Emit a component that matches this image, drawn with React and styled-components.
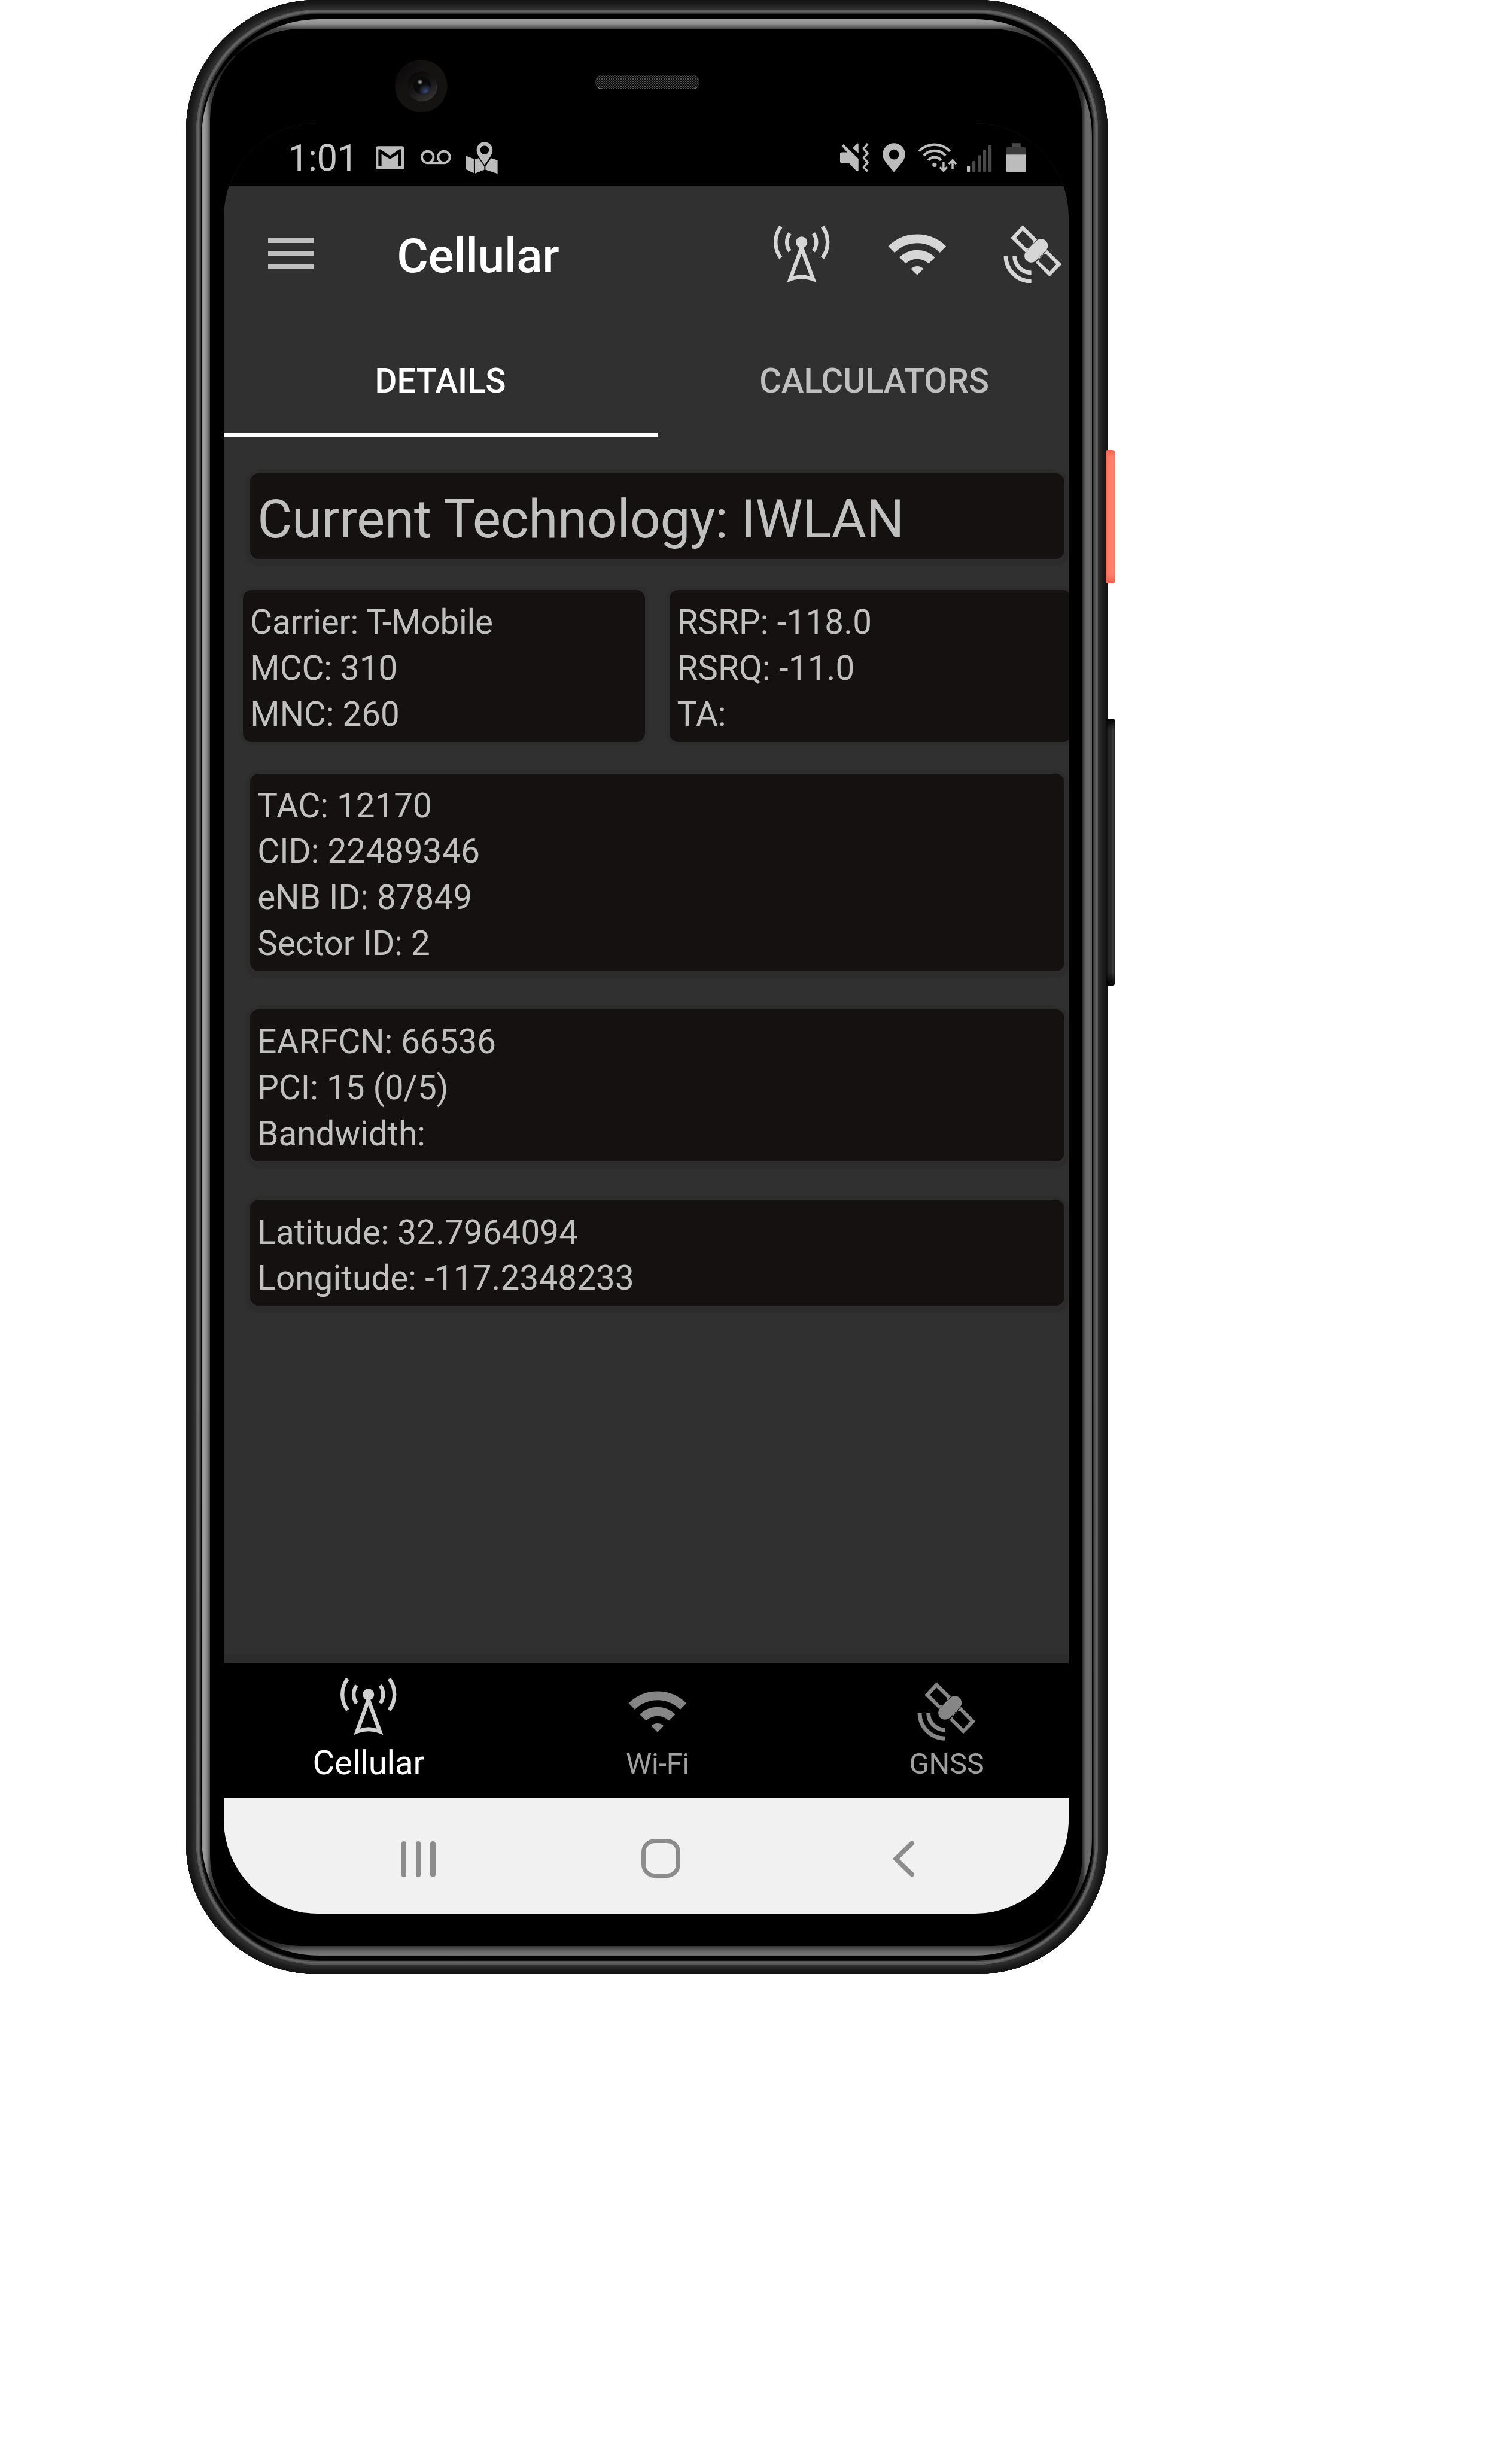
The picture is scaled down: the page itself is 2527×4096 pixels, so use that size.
import React from "react";
import styled, { createGlobalStyle, css } from "styled-components";

const u = (n) => `${+(n * 0.86985).toFixed(3)}px`;

const Global = createGlobalStyle`
  html, body { margin: 0; padding: 0; background: #fff; }
  body { font-family: Roboto, "Liberation Sans", sans-serif; overflow: hidden; }
  *, *::before, *::after { box-sizing: border-box; }
`;

const Stage = styled.main`
  width: ${u(2905)};
  height: ${u(4709)};
  display: flex;
  align-items: flex-start;
  padding-left: ${u(358)};
  background: #fff;
`;

const Body = styled.div`
  width: ${u(1770)};
  height: ${u(3793)};
  flex: none;
  padding: ${u(18)} ${u(19)} ${u(19)};
  border-radius: ${u(250)};
  background: #303030;
  box-shadow:
    inset 0 0 0 ${u(2)} #161314,
    inset 0 0 0 ${u(5)} #181616,
    inset 0 0 0 ${u(8)} #1a1a1a,
    inset 0 0 0 ${u(11)} #1e1e1e,
    inset 0 0 0 ${u(14)} #252525,
    inset 0 0 0 ${u(17)} #2c2c2c;
`;

const Rim = styled.div`
  height: 100%;
  padding: ${u(8)} ${u(9)};
  border-radius: ${u(234)};
  background: linear-gradient(to bottom, #303030, #303030 70%, #181818);
  box-shadow:
    inset 0 0 0 ${u(2)} #555,
    inset 0 0 0 ${u(5)} #646464,
    inset 0 0 0 ${u(7)} #4c4c4c;
`;

const Groove = styled.div`
  height: 100%;
  padding: ${u(11)} ${u(2)} ${u(9)};
  border-radius: ${u(228)};
  background: #020202;
`;

const Glint = styled.div`
  height: 100%;
  padding: ${u(18)} ${u(18)} ${u(18)} ${u(16)};
  border-radius: ${u(226)};
  overflow: hidden;
  background:
    linear-gradient(to bottom, #a2a2a2 0, #8e8e8e ${u(9)}, #484848 ${u(18)}, #2a2a2a ${u(40)}, #060606 ${u(70)}) top / 100% ${u(70)} no-repeat,
    linear-gradient(to top, #7c7c7c 0, #686868 ${u(8)}, #333 ${u(18)}, #1c1c1c ${u(40)}, #060606 ${u(70)}) bottom / 100% ${u(70)} no-repeat,
    linear-gradient(to right, #8e8e8e 0, #9c9c9c ${u(5)}, #868686 ${u(10)}, #444 ${u(16)}, #222 ${u(40)}) left / 50% 100% no-repeat,
    linear-gradient(to left, #5c5c5c 0, #6c6c6c ${u(6)}, #666 ${u(12)}, #303030 ${u(18)}, #1a1a1a ${u(40)}) right / 50% 100% no-repeat;
`;

const Glass = styled.div`
  height: 100%;
  border-radius: ${u(174)};
  background: #000;
  display: flex;
  flex-direction: column;
`;

const Sensors = styled.div`
  height: ${u(182)};
  flex: none;
  display: flex;
  align-items: flex-start;
  padding: ${u(59.5)} 0 0 ${u(354.7)};
`;

const Earpiece = styled.div`
  width: ${u(200)};
  height: ${u(28)};
  margin: ${u(28.7)} 0 0 ${u(284)};
  border-radius: ${u(13)};
  border: ${u(1.5)} solid #2a2a2a;
  border-bottom-color: #8a8a8a;
  background:
    radial-gradient(circle, #666 22%, transparent 42%) 0 0 / ${u(4.6)} ${u(4.6)},
    radial-gradient(circle, #444 18%, transparent 38%) ${u(2.3)} ${u(2.3)} / ${u(4.6)} ${u(4.6)},
    #080808;
`;

const Screen = styled.div`
  height: ${u(3440)};
  flex: none;
  margin: 0 ${u(27)} 0 ${u(25.5)};
  border-radius: ${u(180)};
  overflow: hidden;
  display: flex;
  flex-direction: column;
  background: #303030;
`;

const StatusBar = styled.div`
  height: ${u(121)};
  flex: none;
  display: flex;
  align-items: flex-start;
  padding: ${u(35.3)} 0 0 ${u(123.5)};
  background: #000;
`;

const Clock = styled.span`
  width: ${u(168.7)};
  flex: none;
  margin-top: ${u(1.5)};
  font-size: ${u(70.7)};
  line-height: ${u(62)};
  letter-spacing: ${u(-0.5)};
  color: #c4c4c4;
  white-space: nowrap;
`;

const Glyph = styled.svg`
  display: block;
  flex: none;
  height: ${u(62)};
  width: ${(p) => u(p.$w)};
  margin-left: ${(p) => u(p.$gap || 0)};
  overflow: visible;
`;

/* The app lays out slightly wider than the visible glass and is cut at its right edge. */
const AppLayer = styled.div`
  width: ${u(1667)};
  flex: none;
`;

const Toolbar = styled.header`
  height: ${u(253)};
  display: flex;
  align-items: flex-start;
  padding: ${u(74)} 0 0 ${u(85.5)};
`;

const Menu = styled.div`
  width: ${u(87)};
  height: ${u(60)};
  margin-top: ${u(24.5)};
  flex: none;
  display: flex;
  flex-direction: column;
  justify-content: space-between;
  span { height: ${u(10)}; background: #c0c0c0; }
`;

const Title = styled.h1`
  margin: 0 0 0 ${u(160.5)};
  width: ${u(721.5)};
  font-size: ${u(92.6)};
  font-weight: 500;
  line-height: ${u(120)};
  letter-spacing: ${u(-0.4)};
  color: #fff;
`;

const Icon = styled.svg`
  display: block;
  flex: none;
  width: ${u(112)};
  height: ${u(112)};
  color: ${(p) => p.$color};
`;

const Actions = styled.div`
  display: flex;
  gap: ${u(110)};
`;

const Tabs = styled.nav`
  height: ${u(230)};
  display: flex;
`;

const Tab = styled.div`
  flex: 1;
  display: flex;
  justify-content: center;
  padding-top: ${u(76.3)};
  font-size: ${u(65)};
  font-weight: 500;
  line-height: ${u(90)};
  letter-spacing: ${u(-0.1)};
  color: ${(p) => (p.$active ? "#fff" : "#bfbfbf")};
  background: linear-gradient(${(p) => (p.$active ? "#fff, #fff" : "transparent, transparent")}) 0 ${u(220)} / 100% ${u(9.7)} no-repeat;
`;

const Cards = styled.section`
  height: ${u(2354)};
  padding-top: ${u(68.8)};
  display: flex;
  flex-direction: column;
`;

const Card = styled.div`
  margin: 0 ${u(50.8)} ${(p) => u(p.$after)};
  padding: ${u(18.5)} ${u(13.5)} ${u(8.2)} ${u(14.5)};
  border-radius: ${u(17)};
  background: #151111;
  box-shadow: 0 ${u(4)} ${u(3)} ${u(8)} #2c2c2c;
  color: #c0c0c0;
  font-size: ${u(65)};
  line-height: ${u(88.2)};
  white-space: nowrap;
  ${(p) => p.$headline && css`
    padding: ${u(19.5)} ${u(13.5)} ${u(7.2)} ${u(14.5)};
    font-size: ${u(102.4)};
    line-height: ${u(137.5)};
    letter-spacing: ${u(-0.25)};
  `}
`;

const Row = styled.div`
  letter-spacing: ${(p) => u(p.$track)};
`;

const Pair = styled.div`
  display: flex;
  gap: ${u(46.5)};
  margin: 0 ${u(37)} ${u(60.9)};
  ${Card} { flex: 1; margin: 0; box-shadow: 0 0 ${u(2)} ${u(5)} #2d2d2d; }
`;

const BottomNav = styled.nav`
  height: ${u(259)};
  display: flex;
  padding-left: ${u(1)};
  background: #000;
  box-shadow: 0 ${u(-8)} 0 ${u(9)} #2c2c2c;
`;

const NavItem = styled.div`
  flex: 1;
  display: flex;
  flex-direction: column;
  align-items: center;
  padding-top: ${(p) => u(p.$active ? 28 : 36.8)};
  font-size: ${(p) => u(p.$active ? 64.8 : 56)};
  line-height: ${u(80)};
  letter-spacing: ${u(-0.25)};
  color: ${(p) => (p.$active ? "#fff" : "#a0a0a0")};
  span { margin-top: ${(p) => u(p.$active ? 12.3 : 5.6)}; }
`;

const SystemBar = styled.footer`
  flex: 1;
  display: flex;
  align-items: flex-start;
  padding: ${u(79)} 0 0 ${u(341.5)};
  background: #f1f1f1;
  color: #8c8c8c;
`;

const Recents = styled.div`
  width: ${u(65.5)};
  height: ${u(70)};
  margin-top: ${u(4)};
  display: flex;
  justify-content: space-between;
  span { width: ${u(9.5)}; border-radius: ${u(5)}; background: currentColor; }
`;

const HomeKey = styled.div`
  width: ${u(74.5)};
  height: ${u(75)};
  margin-left: ${u(396)};
  border: ${u(9)} solid currentColor;
  border-radius: ${u(26)};
`;

const BackKey = styled.svg`
  width: ${u(42)};
  height: ${u(70)};
  margin: ${u(3)} 0 0 ${u(408.5)};
`;

const SideButtons = styled.div`
  display: flex;
  flex-direction: column;
  margin-left: ${u(-3)};
  padding-top: ${u(865)};
  gap: ${u(259.5)};
`;

const SideButton = styled.div`
  width: ${u(17.5)};
  height: ${(p) => u(p.$h)};
  border-radius: ${u(4)} ${u(6)} ${u(6)} ${u(4)};
  background: ${(p) => p.$power
    ? `linear-gradient(to bottom, #ee6450 0, transparent ${u(14)}, transparent calc(100% - ${u(18)}), #e8604d 100%), linear-gradient(to right, #ee6653 0, #ff7d69 25%, #ff836f 75%, #f87562)`
    : `linear-gradient(to bottom, #000 0, transparent ${u(22)}, transparent calc(100% - ${u(26)}), #000 100%), linear-gradient(to right, #070707 0, #262626 30%, #2a2a2a 60%, #3c3c3c 75%, #1a1a1a)`};
`;

const CameraArt = styled.svg`
  display: block;
  flex: none;
  width: ${u(101)};
  height: ${u(101)};
`;

function Camera() {
  return (
    <CameraArt viewBox="175 72 303 303">
      <defs>
        <linearGradient id="ring" x1="0" y1="0" x2="1" y2="1">
          <stop offset="0" stopColor="#060505" /><stop offset=".35" stopColor="#151212" />
        </linearGradient>
        <linearGradient id="barrel" x1=".2" y1="0" x2=".75" y2="1">
          <stop offset="0" stopColor="#060606" /><stop offset=".5" stopColor="#161616" /><stop offset="1" stopColor="#353535" />
        </linearGradient>
        <radialGradient id="blue"><stop offset="0" stopColor="#3c4670" /><stop offset="1" stopColor="#3c4670" stopOpacity="0" /></radialGradient>
        <radialGradient id="spark"><stop offset="0" stopColor="#a8a8a8" /><stop offset="1" stopColor="#a8a8a8" stopOpacity="0" /></radialGradient>
        <clipPath id="lens"><circle cx="332" cy="220" r="50" /></clipPath>
      </defs>
      <circle cx="326" cy="223" r="151" fill="url(#ring)" />
      <circle cx="332" cy="224" r="86" fill="url(#barrel)" />
      <path d="M417 215a86 86 0 0 1-110 91" fill="none" stroke="#484848" strokeWidth="2" />
      <circle cx="332" cy="220" r="50" fill="#0b0a0b" />
      <g clipPath="url(#lens)">
        <circle cx="352" cy="252" r="42" fill="url(#blue)" />
      </g>
      <circle cx="320" cy="200" r="17" fill="url(#spark)" />
    </CameraArt>
  );
}

function TowerIcon({ color }) {
  return (
    <Icon $color={color} viewBox="1484 432 112 112" fill="currentColor">
      <circle cx="1540" cy="465" r="11" />
      <g fill="none" stroke="currentColor" strokeWidth="7.3">
        <path d="M1500 435a50 50 0 0 0 0 60M1580 435a50 50 0 0 1 0 60" />
        <path d="M1517.4 448a28.3 28.3 0 0 0 0 34M1562.6 448a28.3 28.3 0 0 1 0 34" />
      </g>
      <path fillRule="evenodd" d="M1536.5 474 1511.8 543Q1540 528.4 1568.5 543L1543.5 474ZM1540 486.7 1524 530.7Q1540 524.7 1556 530.7Z" />
    </Icon>
  );
}

function WifiIcon({ color }) {
  return (
    <Icon $color={color} viewBox="1706 432 112 112" fill="currentColor">
      <g fill="none" stroke="currentColor" strokeWidth="17.2">
        <path d="M1712.7 478.8a70 70 0 0 1 99 0" />
        <path d="M1734.1 500.2a39.7 39.7 0 0 1 56.2 0" />
      </g>
      <path d="M1762.2 528.3 1750.2 516.3a17 17 0 0 1 24 0Z" />
    </Icon>
  );
}

function SatelliteIcon({ color }) {
  return (
    <Icon $color={color} viewBox="1928 432 112 112" fill="currentColor">
      <path fillRule="evenodd" d="M1964.9 432.7 1942 456.7 1970 484 1992.8 459.5ZM1964.9 442.7 1984.9 462.3 1985.3 470 1979.5 476H1971.5L1952.2 456.7Z" />
      <path fillRule="evenodd" d="M2012 480 2039.8 507.7 2016.5 531.3 1990 504.5ZM2003.8 487.7 1996 495.5 1996.5 502.5 2016.9 521.3 2029.6 507.7 2010.5 487.7Z" />
      <path d="M2000.3 471.7 1981.4 491.2" fill="none" stroke="currentColor" strokeWidth="26" strokeLinecap="round" />
      <g fill="none" stroke="currentColor" strokeWidth="7.8">
        <path d="M1932.6 491.7a49 49 0 0 0 49 48.6" />
        <path d="M1949.4 491.7a32.2 32.2 0 0 0 32.2 32.2" />
      </g>
    </Icon>
  );
}

function StatusIcons() {
  return (
    <>
      <Glyph $w={54.7} viewBox="65 547 164 186">
        <rect x="65" y="572" width="164" height="134" rx="14" fill="#bcbcbc" />
        <path d="M80 590H92L147 627 201 590H213V688H196V617L147 646 98 617V688H80Z" fill="#000" />
      </Glyph>
      <Glyph $w={58.3} $gap={31.3} viewBox="323 547 175 186" fill="none" stroke="#bcbcbc" strokeWidth="13.5">
        <circle cx="363.5" cy="635" r="33.5" /><circle cx="457.5" cy="635" r="33.5" />
        <path d="M363 668.5H458" />
      </Glyph>
      <Glyph $w={62} $gap={28} viewBox="582 547 186 186" fill="#bcbcbc">
        <path d="M584 627 630 645V727L584 705ZM637 648 658 641 690 688V708L637 729ZM730 641 767 653V731L697 707V688Z" />
        <path fillRule="evenodd" d="M692 548a46 46 0 0 1 46 46c0 28-28 60-46 86c-18-26-46-58-46-86a46 46 0 0 1 46-46ZM692 569a25 25 0 1 0 .1 0Z" />
      </Glyph>
      <Glyph $w={56} $gap={658} viewBox="42 22 168 186" fill="#bcbcbc">
        <path d="M42 92q0-10 10-10H83L51 46 62 36 148 120V188q-5 7-12 1L93 144H52q-10 0-10-10ZM114 58 140 32q8-4 8 4V88Z" />
        <path d="M201 33 178 62 201 88 178 114 201 141 178 168 200 192" fill="none" stroke="#bcbcbc" strokeWidth="12" strokeLinejoin="round" />
      </Glyph>
      <Glyph $w={43.7} $gap={25.7} viewBox="287 22 131 186" fill="#bcbcbc">
        <path fillRule="evenodd" d="M352.5 30a65 65 0 0 1 65 65c0 34-40 69-65 101c-25-32-65-67-65-101a65 65 0 0 1 65-65ZM353 66a29 29 0 1 0 .1 0Z" />
      </Glyph>
      <Glyph $w={75} $gap={24} viewBox="490 22 225 186" fill="none" stroke="#bcbcbc" strokeWidth="14.5">
        <path d="M497 76a123 123 0 0 1 178 0M524 101a84.7 84.7 0 0 1 125 0M550 128a46.6 46.6 0 0 1 73 0" />
        <circle cx="586" cy="154" r="12.5" fill="#bcbcbc" stroke="none" />
        <path d="M638 138V188M617 168 638 189 659 168M690 178V130M668 150 690 128 711 150" strokeWidth="12" />
      </Glyph>
      <Glyph $w={47.5} $gap={19} viewBox="772 22 142.5 186" fill="#494949">
        <rect x="772" y="160" width="18" height="37" rx="6" fill="#bcbcbc" />
        <rect x="803" y="132" width="18" height="65" rx="6" />
        <rect x="834" y="99" width="18" height="98" rx="6" />
        <rect x="865" y="67" width="18" height="130" rx="6" />
        <rect x="896" y="39" width="18" height="158" rx="6" />
      </Glyph>
      <Glyph $w={37.5} $gap={28.8} viewBox="1000 22 112.5 186">
        <path d="M1031 53V30H1082V53Z" fill="#4a4a4a" />
        <path d="M1000 96V60q0-7 7-7H1105q7 0 7 7V96Z" fill="#3a3a3a" />
        <path d="M1000 95H1112V190q0 7-7 7H1007q-7 0-7-7Z" fill="#bcbcbc" />
      </Glyph>
    </>
  );
}

const TOOL = "#d6d6d6";
const carrier = [["Carrier: T-Mobile", -0.25], ["MCC: 310", 0], ["MNC: 260", 0]];
const signal = [["RSRP: -118.0", 0.15], ["RSRQ: -11.0", 0.15], ["TA:", 0]];
const groups = [
  { after: 74.3, rows: [["TAC: 12170", 0], ["CID: 22489346", 0.05], ["eNB ID: 87849", 0], ["Sector ID: 2", 0]] },
  { after: 74.4, rows: [["EARFCN: 66536", 0], ["PCI: 15 (0/5)", 0], ["Bandwidth:", 0]] },
  { after: 0, rows: [["Latitude: 32.7964094", 0.13], ["Longitude: -117.2348233", 0.13]] },
];
const Lines = ({ rows }) => rows.map(([text, track]) => <Row key={text} $track={track}>{text}</Row>);

export default function App() {
  return (
    <Stage>
      <Global />
      <Body><Rim><Groove><Glint><Glass>
        <Sensors><Camera /><Earpiece /></Sensors>
        <Screen>
          <StatusBar><Clock>1:01</Clock><StatusIcons /></StatusBar>
          <AppLayer>
            <Toolbar>
              <Menu><span /><span /><span /></Menu>
              <Title>Cellular</Title>
              <Actions>
                <TowerIcon color={TOOL} /><WifiIcon color={TOOL} /><SatelliteIcon color={TOOL} />
              </Actions>
            </Toolbar>
            <Tabs><Tab $active>DETAILS</Tab><Tab>CALCULATORS</Tab></Tabs>
            <Cards>
              <Card $headline $after={60}>Current Technology: IWLAN</Card>
              <Pair>
                <Card><Lines rows={carrier} /></Card>
                <Card><Lines rows={signal} /></Card>
              </Pair>
              {groups.map((g) => <Card key={g.rows[0][0]} $after={g.after}><Lines rows={g.rows} /></Card>)}
            </Cards>
            <BottomNav>
              <NavItem $active><TowerIcon color="#cfcfcf" /><span>Cellular</span></NavItem>
              <NavItem><WifiIcon color="#868686" /><span>Wi-Fi</span></NavItem>
              <NavItem><SatelliteIcon color="#868686" /><span>GNSS</span></NavItem>
            </BottomNav>
          </AppLayer>
          <SystemBar>
            <Recents><span /><span /><span /></Recents>
            <HomeKey />
            <BackKey viewBox="0 0 42 70">
              <path d="M37 5 6 35 37 65" fill="none" stroke="currentColor" strokeWidth="9" strokeLinecap="round" />
            </BackKey>
          </SystemBar>
        </Screen>
      </Glass></Glint></Groove></Rim></Body>
      <SideButtons>
        <SideButton $power $h={256} /><SideButton $h={512.5} />
      </SideButtons>
    </Stage>
  );
}
